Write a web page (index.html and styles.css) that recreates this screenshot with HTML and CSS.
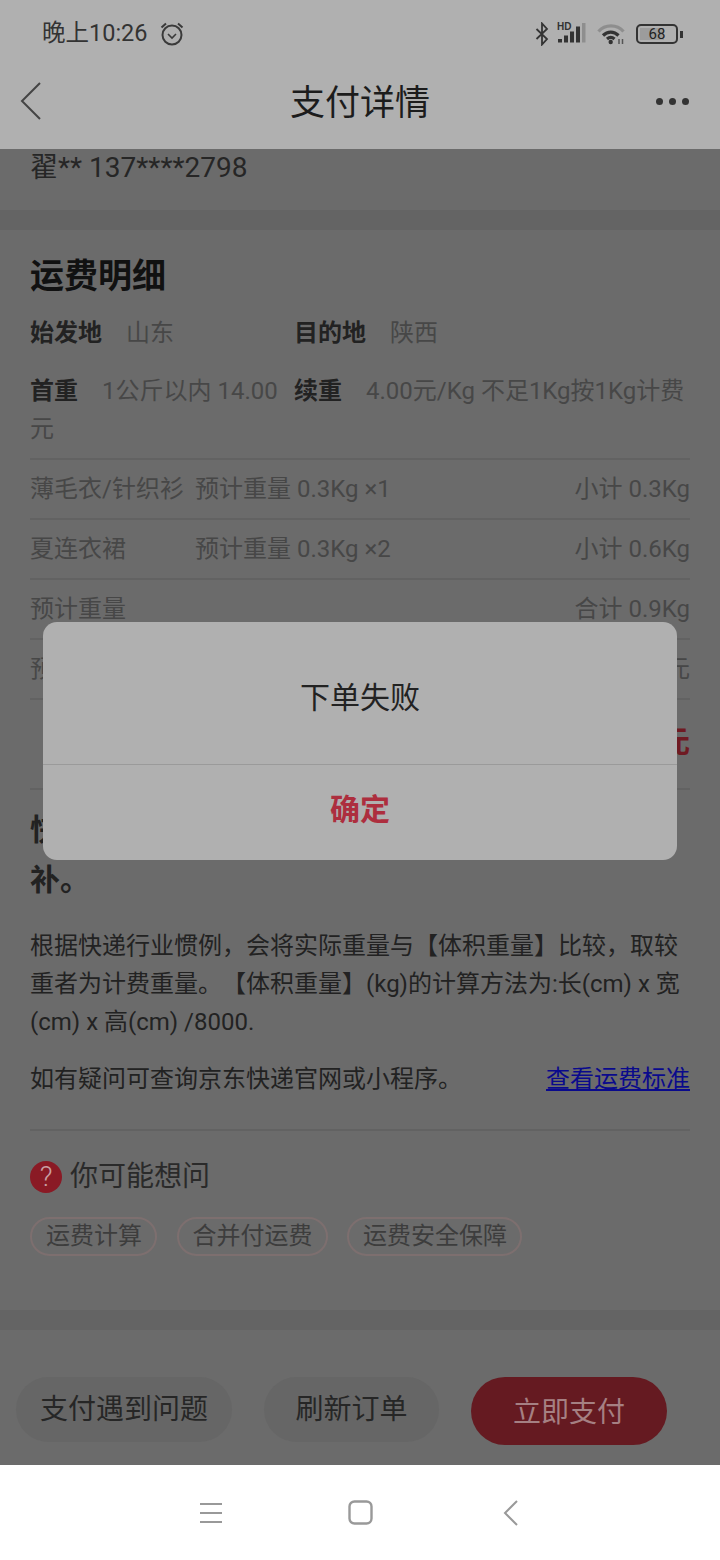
FILE: index.html
```html
<!DOCTYPE html>
<html>
<head>
  <link rel="stylesheet" href="styles.css">
</head>
<body>
  <div class="screen">
    <div class="topbar">
      <div class="status">
        <div class="status-left">
          <span class="clock">晚上10:26</span>
          <svg class="alarm" width="24" height="24" viewBox="0 0 24 24" fill="none" stroke="#3a3a3a" stroke-width="2">
            <circle cx="12" cy="13" r="9.5"/>
            <path d="M8 12l4 4 4-4" stroke-width="1.6"/>
            <path d="M1.5 5.5L6 1.5M22.5 5.5L18 1.5"/>
          </svg>
        </div>
        <div class="status-right">
          <svg width="14" height="24" viewBox="0 0 14 24" fill="none" stroke="#333" stroke-width="1.8">
            <path d="M1.5 7l10.5 10-5 5.5V1.500l5 5.500L1.500 17"/>
          </svg>
          <svg class="signal" width="30" height="24" viewBox="0 0 30 24">
            <text x="0" y="8" class="hd">HD</text>
            <rect x="1" y="17" width="4" height="3.500" fill="#333"/>
            <rect x="7" y="13.500" width="4" height="7" fill="#333"/>
            <rect x="13" y="9.500" width="4" height="11" fill="#333"/>
            <rect x="19" y="4.500" width="4" height="16" fill="#333"/>
            <rect x="25" y="1" width="3.500" height="19.500" fill="#8e8e8e"/>
          </svg>
          <svg class="wifi" width="29" height="22" viewBox="0 0 29 22" fill="none" stroke-width="3.200">
            <path d="M1.500 8.500C8 1 20 1 26.500 8.500" stroke="#8e8e8e"/>
            <path d="M6 12.500C10.500 8 17 8 21.500 12.500" stroke="#333"/>
            <path d="M10 16c2.500-2.200 5-2.200 7.500 0" stroke="#333"/>
            <circle cx="13.700" cy="19" r="2.200" fill="#333" stroke="none"/>
            <path d="M22 16v5M25.500 16v5" stroke="#555" stroke-width="1.500"/>
          </svg>
          <div class="battery"><span class="battery-fill"></span><span class="battery-num">68</span></div>
          <span class="battery-nub"></span>
        </div>
      </div>
      <div class="titlebar">
        <svg class="back" width="22" height="38" viewBox="0 0 22 38" fill="none" stroke="#444" stroke-width="2">
          <path d="M20 1L2 19l18 18"/>
        </svg>
        <div class="title">支付详情</div>
        <div class="dots"><i></i><i></i><i></i></div>
      </div>
    </div>

    <div class="content">
      <div class="block address">翟** 137****2798</div>
      <div class="band"></div>
      <div class="block fee">
        <h2>运费明细</h2>
        <div class="info-grid">
          <div class="info info-place"><b>始发地</b><span>山东</span></div>
          <div class="info info-place"><b>目的地</b><span>陕西</span></div>
          <div class="info"><b>首重</b><span>1公斤以内 14.00元</span></div>
          <div class="info"><b>续重</b><span>4.00元/Kg 不足1Kg按1Kg计费</span></div>
        </div>
        <div class="row"><span class="row-name">薄毛衣/针织衫</span><span class="row-mid">预计重量 0.3Kg ×1</span><span class="row-end">小计 0.3Kg</span></div>
        <div class="row"><span class="row-name">夏连衣裙</span><span class="row-mid">预计重量 0.3Kg ×2</span><span class="row-end">小计 0.6Kg</span></div>
        <div class="row"><span class="row-name">预计重量</span><span class="row-mid"></span><span class="row-end">合计 0.9Kg</span></div>
        <div class="row"><span class="row-name">预估运费</span><span class="row-mid"></span><span class="row-end">14.00元</span></div>
        <div class="row row-total"><span class="row-end">14.00元</span></div>
        <h3>快递运费为预估价格，实际以称重为准，多退少补。</h3>
        <p class="note">根据快递行业惯例，会将实际重量与【体积重量】比较，取较重者为计费重量。【体积重量】(kg)的计算方法为:长(cm) x 宽(cm) x 高(cm) /8000.</p>
        <div class="query">
          <span>如有疑问可查询京东快递官网或小程序。</span>
          <a href="#">查看运费标准</a>
        </div>
        <div class="faq">
          <div class="faq-head"><span class="faq-icon">?</span>你可能想问</div>
          <div class="tags">
            <span class="tag">运费计算</span>
            <span class="tag">合并付运费</span>
            <span class="tag">运费安全保障</span>
          </div>
        </div>
      </div>
      <div class="band"></div>
    </div>

    <div class="actions">
      <span class="btn btn-help">支付遇到问题</span>
      <span class="btn btn-refresh">刷新订单</span>
      <span class="btn btn-pay">立即支付</span>
    </div>

    <div class="navbar">
      <svg width="22" height="22" viewBox="0 0 22 22" stroke="#999" stroke-width="2">
        <path d="M0 2h22M0 11h22M0 20h22"/>
      </svg>
      <svg class="nav-home" width="25" height="25" viewBox="0 0 25 25" fill="none" stroke="#999" stroke-width="2.400">
        <rect x="1.500" y="1.500" width="22" height="22" rx="5"/>
      </svg>
      <svg class="nav-back" width="16" height="26" viewBox="0 0 16 26" fill="none" stroke="#999" stroke-width="2">
        <path d="M14 1L2 13l12 12"/>
      </svg>
    </div>

    <div class="dialog">
      <div class="dialog-msg">下单失败</div>
      <div class="dialog-ok">确定</div>
    </div>
  </div>
</body>
</html>
```

FILE: styles.css
```css
* {
  box-sizing: border-box;
}
body {
  margin: 0;
  font-family: Roboto, "Noto Sans CJK SC", sans-serif;
  text-spacing-trim: space-all;
}
.screen {
  position: relative;
  width: 720px;
  height: 1560px;
  display: flex;
  flex-direction: column;
  overflow: hidden;
  background: #6b6b6b;
}

/* top */
.topbar {
  height: 149px;
  flex: none;
  background: #b0b0b0;
}
.status {
  height: 68px;
  padding: 0 37px 0 42px;
  display: flex;
  align-items: center;
  justify-content: space-between;
}
.status-left {
  display: flex;
  align-items: center;
  gap: 12px;
}
.clock {
  font-size: 23.500px;
  line-height: 26px;
  padding-bottom: 2px;
  color: #333;
}
.status-right {
  display: flex;
  align-items: center;
}
.signal {
  margin-left: 8px;
}
.hd {
  font-family: "Liberation Sans", sans-serif;
  font-size: 10px;
  font-weight: bold;
  fill: #333;
}
.wifi {
  margin-left: 10px;
}
.battery {
  position: relative;
  width: 42px;
  height: 20px;
  margin-left: 10px;
  border: 2.500px solid #333;
  border-radius: 5px;
  display: flex;
  align-items: center;
  justify-content: center;
}
.battery-fill {
  position: absolute;
  left: 2px;
  top: 2px;
  bottom: 2px;
  width: 24px;
  background: #9c9c9c;
}
.battery-num {
  position: relative;
  font-size: 15px;
  color: #222;
}
.battery-nub {
  width: 3px;
  height: 7px;
  margin-left: 2px;
  background: #333;
}
.titlebar {
  height: 66px;
  padding: 0 31px 0 20px;
  display: flex;
  align-items: center;
  justify-content: space-between;
  position: relative;
}
.title {
  position: absolute;
  left: 0;
  right: 0;
  padding-bottom: 4px;
  text-align: center;
  font-size: 35px;
  color: #1c1c1c;
}
.dots {
  display: flex;
  gap: 6px;
}
.dots i {
  width: 7px;
  height: 7px;
  border-radius: 50%;
  background: #333;
}

/* scrolled page */
.content {
  flex: 1;
  overflow: hidden;
}
.block {
  padding: 0 30px;
}
.address {
  height: 61px;
  padding-top: 1px;
  font-size: 28px;
  line-height: 36px;
  color: #262626;
}
.band {
  height: 20px;
  background: #646464;
}
.fee h2 {
  margin: 0;
  padding-top: 24px;
  font-size: 34px;
  line-height: 44px;
  color: #111;
}
.info-grid {
  margin-top: 16px;
  display: grid;
  grid-template-columns: 264px 396px;
  font-size: 24px;
  line-height: 38px;
  padding-bottom: 10px;
}
.info-place {
  margin-bottom: 20px;
}
.info b {
  margin-right: 24px;
  color: #222;
}
.info span {
  color: #474747;
}
.row {
  height: 60px;
  padding-bottom: 6px;
  border-top: 2px solid #626262;
  display: flex;
  align-items: center;
  font-size: 24px;
  color: #474747;
}
.row-name {
  width: 165px;
  white-space: nowrap;
}
.row-mid {
  flex: 1;
}
.row-total {
  height: 90px;
  padding-bottom: 10px;
  justify-content: flex-end;
  font-size: 30px;
  font-weight: bold;
  color: #6f1a22;
}
.fee h3 {
  margin: 0;
  border-top: 2px solid #626262;
  padding-top: 15px;
  font-size: 30px;
  line-height: 50px;
  color: #222;
}
.note {
  margin: 22px 0 0;
  font-size: 24px;
  line-height: 38px;
  color: #222;
}
.query {
  margin-top: 19px;
  padding-bottom: 31px;
  display: flex;
  justify-content: space-between;
  font-size: 24px;
  line-height: 38px;
  color: #222;
}
.query a {
  color: #0a0a8c;
}
.faq {
  border-top: 2px solid #626262;
  padding-top: 25px;
  height: 181px;
}
.faq-head {
  display: flex;
  align-items: center;
  gap: 8px;
  font-size: 28px;
  line-height: 42px;
  color: #2a2a2a;
}
.faq-icon {
  width: 32px;
  height: 32px;
  border-radius: 50%;
  background: #8a1a25;
  color: #c9a0a3;
  font-size: 28px;
  font-weight: 300;
  line-height: 32px;
  text-align: center;
}
.tags {
  margin-top: 19px;
  display: flex;
  gap: 19.500px;
}
.tag {
  height: 39px;
  padding: 0 13px 0 14px;
  border: 2px solid #7d6f6f;
  border-radius: 20px;
  font-size: 24px;
  line-height: 35px;
  color: #3d3d3d;
}

/* bottom */
.actions {
  height: 135px;
  flex: none;
  display: flex;
  align-items: flex-start;
  padding: 47px 0 0 16px;
}
.btn {
  height: 65px;
  border-radius: 33px;
  font-size: 28px;
  line-height: 66px;
  text-align: center;
  color: #262626;
  background: #666;
}
.btn-help {
  width: 216px;
}
.btn-refresh {
  width: 175px;
  margin-left: 32px;
}
.btn-pay {
  width: 196px;
  height: 68px;
  margin-left: 32px;
  border-radius: 34px;
  line-height: 72px;
  color: #a58083;
  background: #651a21;
}
.navbar {
  height: 95px;
  flex: none;
  background: #fff;
  display: flex;
  align-items: center;
  padding-left: 200px;
}
.nav-home {
  margin-left: 126px;
}
.nav-back {
  margin-left: 130px;
}

/* dialog */
.dialog {
  position: absolute;
  left: 43px;
  top: 622px;
  width: 634px;
  height: 238px;
  border-radius: 14px;
  background: #b0b0b0;
  display: flex;
  flex-direction: column;
  text-align: center;
}
.dialog-msg {
  height: 143px;
  border-bottom: 1px solid #9a9a9a;
  font-size: 30px;
  line-height: 152px;
  color: #222;
}
.dialog-ok {
  flex: 1;
  font-size: 30px;
  font-weight: bold;
  line-height: 89px;
  color: #ad2e3e;
}
```
